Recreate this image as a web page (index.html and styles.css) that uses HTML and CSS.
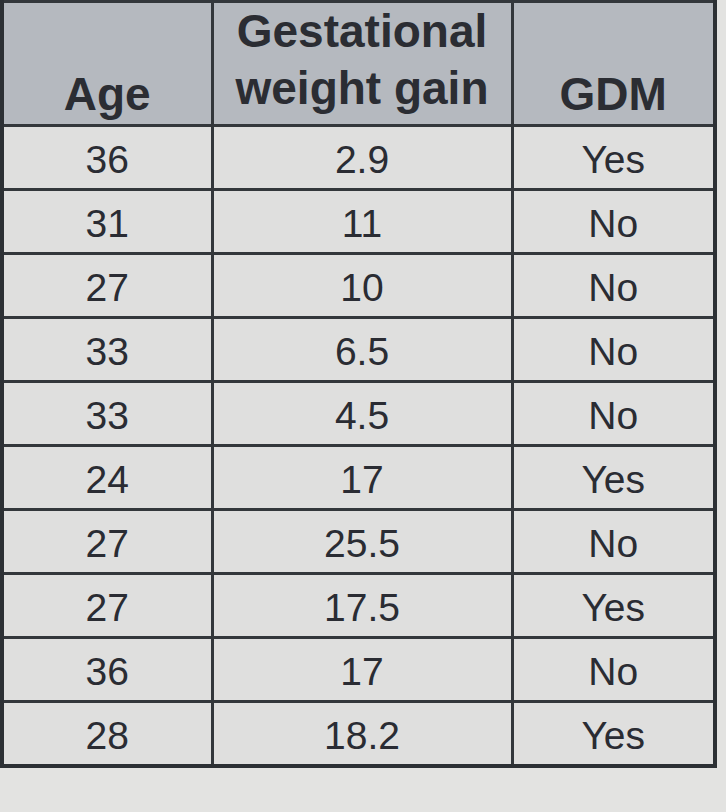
FILE: index.html
```html
<!DOCTYPE html>
<html>
<head>
<meta charset="utf-8">
<link rel="stylesheet" href="styles.css">
</head>
<body>
<table class="data">
  <colgroup>
    <col class="c1"><col class="c2"><col class="c3">
  </colgroup>
  <thead>
    <tr>
      <th>Age</th>
      <th class="two-line">Gestational<br>weight gain</th>
      <th>GDM</th>
    </tr>
  </thead>
  <tbody>
    <tr><td>36</td><td>2.9</td><td>Yes</td></tr>
    <tr><td>31</td><td>11</td><td>No</td></tr>
    <tr><td>27</td><td>10</td><td>No</td></tr>
    <tr><td>33</td><td>6.5</td><td>No</td></tr>
    <tr><td>33</td><td>4.5</td><td>No</td></tr>
    <tr><td>24</td><td>17</td><td>Yes</td></tr>
    <tr><td>27</td><td>25.5</td><td>No</td></tr>
    <tr><td>27</td><td>17.5</td><td>Yes</td></tr>
    <tr><td>36</td><td>17</td><td>No</td></tr>
    <tr><td>28</td><td>18.2</td><td>Yes</td></tr>
  </tbody>
</table>
</body>
</html>
```

FILE: styles.css
```css
html, body {
  margin: 0;
  padding: 0;
  background: #e3e3e1;
}
.data {
  border-collapse: collapse;
  table-layout: fixed;
  width: 713px;
  margin: 0;
  border: 4px solid #2c3034;
  border-top: 2px solid #44484c;
}
.c1 { width: 210px; }
.c2 { width: 300px; }
.c3 { width: 203px; }
.data th, .data td {
  border: 3px solid #33373b;
  text-align: center;
  padding: 0;
  color: #2a2c33;
}
.data th {
  background: #b5b9bf;
  height: 112px;
  vertical-align: bottom;
  font-family: "Liberation Sans", Arial, sans-serif;
  font-weight: bold;
  font-size: 46px;
  line-height: 50px;
  padding-bottom: 5px;
  color: #2b2d33;
}
.data th.two-line {
  line-height: 57px;
  padding-bottom: 7px;
}
.data td {
  background: #dfdfde;
  height: 58px;
  font-family: "Liberation Sans", Arial, sans-serif;
  font-size: 39px;
  line-height: 1;
  vertical-align: middle;
  padding-top: 3px;
}
```
